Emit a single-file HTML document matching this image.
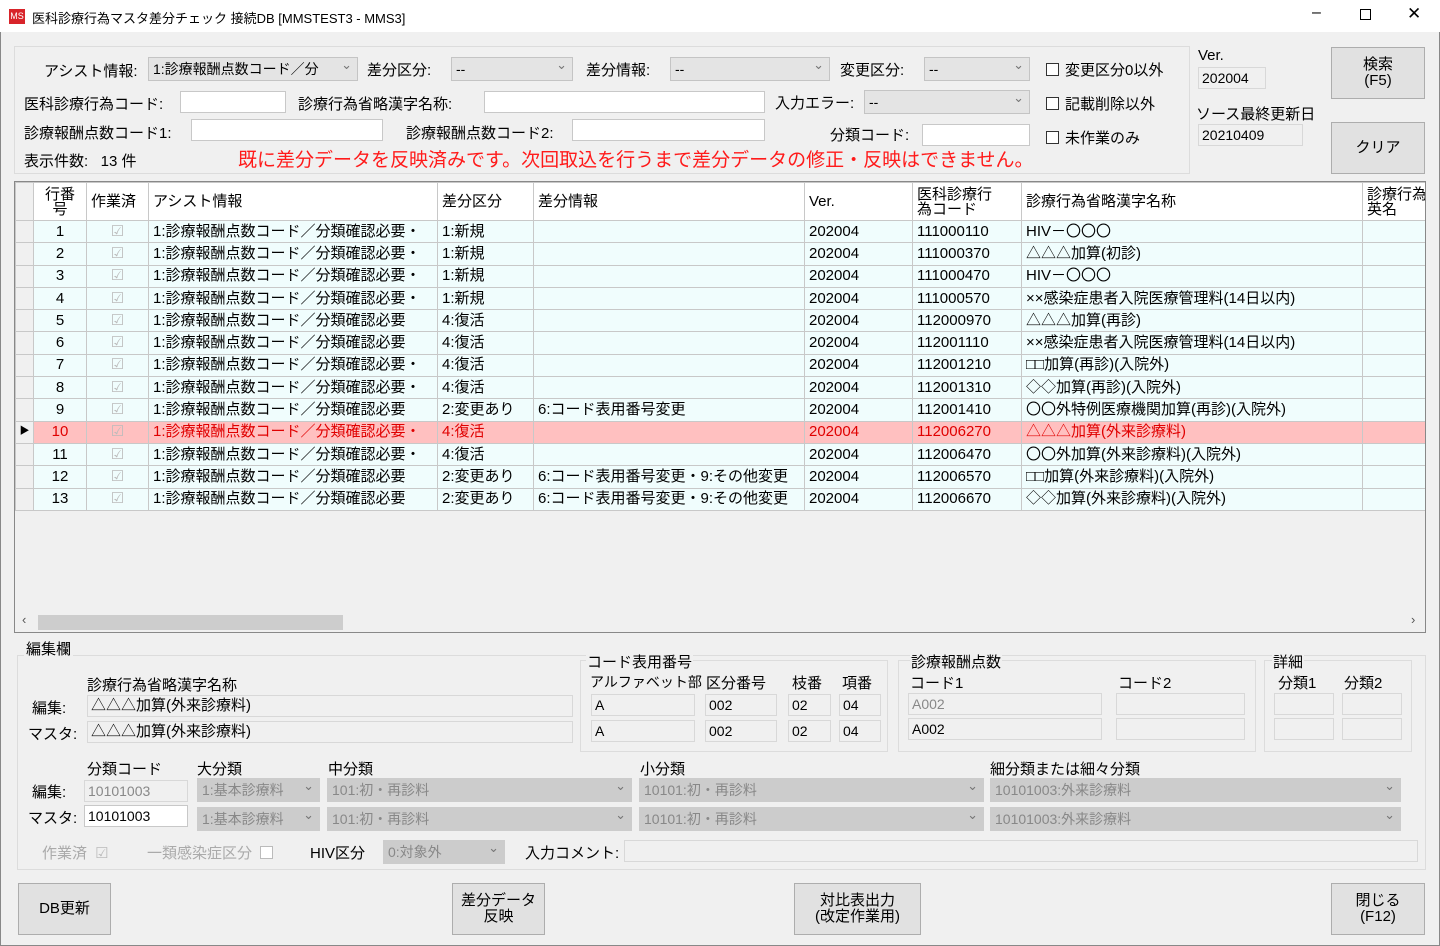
<!DOCTYPE html>
<html><head><meta charset="utf-8"><style>
*{box-sizing:border-box;margin:0;padding:0}
body{width:1440px;height:946px;background:#f0f0f0;font-family:"Liberation Sans","Noto Sans CJK JP",sans-serif;font-size:15px;color:#000;position:relative;overflow:hidden}
.a{position:absolute;white-space:nowrap}
.tb{position:absolute;background:#fff;border:1px solid #c8c8c8;height:22px;padding:1px 3px;font-size:14px;line-height:18px}
.ro{background:#f0f0f0;border:1px solid #d8d8d8}
.cb{position:absolute;background:#e4e4e4;border:1px solid #c4c4c4;height:24px;padding:2px 4px;font-size:14px;line-height:18px;color:#000}
.cb:after{content:"⌄";position:absolute;right:5px;top:-2px;color:#777;font-size:13px}
.dis{background:#ccc;border-color:#ccc;color:#888}
.btn{position:absolute;background:#e1e1e1;border:1px solid #adadad;text-align:center;font-size:15px;line-height:16px;display:flex;align-items:center;justify-content:center}
.chk{display:inline-block;width:13px;height:13px;border:1px solid #333;background:#fff;vertical-align:-1px;margin-right:6px}
.grp{position:absolute;border:1px solid #dcdcdc}
.wrap{position:absolute;left:15px;top:182px;width:1410px;height:432px;overflow:hidden}
table{border-collapse:collapse;table-layout:fixed;width:1410px}
td,th{border:1px solid #c8c8c8;height:22.3px;font-size:15px;line-height:18px;padding:0 4px;overflow:hidden;white-space:nowrap;font-weight:normal;text-align:left}
th{height:38px;background:#fff}
tr.r td{background:#f0fdfd}
tr.s td{background:#ffc0c0;color:#e00000}
td.rh{background:#f0f0f0!important}
td.c{text-align:center}
.ck{color:#bbb!important;font-size:15px}
</style></head><body>
<div class="a" style="left:0;top:0;width:1440px;height:32px;background:#fff"></div>
<div class="a" style="left:9px;top:9px;width:16px;height:15px;background:#d8242a;color:#fff;font-size:9px;line-height:15px;text-align:center">MS</div>
<div class="a" style="left:32px;top:8px;font-size:13px">医科診療行為マスタ差分チェック 接続DB [MMSTEST3 - MMS3]</div>
<div class="a" style="left:1312px;top:4px;font-size:16px">–</div>
<div class="a" style="left:1360px;top:9px;width:11px;height:11px;border:1px solid #000"></div>
<div class="a" style="left:1407px;top:4px;font-size:17px">✕</div>
<div class="a" style="left:0;top:32px;width:1440px;height:914px;border:1px solid #888;border-top:none"></div>

<div class="grp" style="left:14px;top:46px;width:1176px;height:128px"></div>
<div class="a" style="left:44px;top:60px">アシスト情報:</div>
<div class="cb" style="left:148px;top:57px;width:210px">1:診療報酬点数コード／分</div>
<div class="a" style="left:367px;top:59px">差分区分:</div>
<div class="cb" style="left:451px;top:57px;width:122px">--</div>
<div class="a" style="left:586px;top:59px">差分情報:</div>
<div class="cb" style="left:670px;top:57px;width:160px">--</div>
<div class="a" style="left:840px;top:59px">変更区分:</div>
<div class="cb" style="left:924px;top:57px;width:106px">--</div>
<div class="a" style="left:1046px;top:59px"><span class="chk"></span>変更区分0以外</div>
<div class="a" style="left:24px;top:93px">医科診療行為コード:</div>
<div class="tb" style="left:180px;top:91px;width:106px"></div>
<div class="a" style="left:298px;top:93px">診療行為省略漢字名称:</div>
<div class="tb" style="left:484px;top:91px;width:281px"></div>
<div class="a" style="left:775px;top:92px">入力エラー:</div>
<div class="cb" style="left:864px;top:90px;width:166px">--</div>
<div class="a" style="left:1046px;top:93px"><span class="chk"></span>記載削除以外</div>
<div class="a" style="left:24px;top:122px">診療報酬点数コード1:</div>
<div class="tb" style="left:191px;top:119px;width:192px"></div>
<div class="a" style="left:406px;top:122px">診療報酬点数コード2:</div>
<div class="tb" style="left:572px;top:119px;width:193px"></div>
<div class="a" style="left:830px;top:124px">分類コード:</div>
<div class="tb" style="left:922px;top:124px;width:108px"></div>
<div class="a" style="left:1046px;top:127px"><span class="chk"></span>未作業のみ</div>
<div class="a" style="left:24px;top:150px">表示件数:&nbsp;&nbsp; 13 件</div>
<div class="a" style="left:238px;top:145px;font-size:19px;color:#ff1a1a">既に差分データを反映済みです。次回取込を行うまで差分データの修正・反映はできません。</div>
<div class="a" style="left:1198px;top:47px">Ver.</div>
<div class="tb ro" style="left:1198px;top:67px;width:68px">202004</div>
<div class="a" style="left:1196px;top:103px">ソース最終更新日</div>
<div class="tb ro" style="left:1198px;top:124px;width:105px">20210409</div>
<div class="btn" style="left:1331px;top:47px;width:94px;height:52px">検索<br>(F5)</div>
<div class="btn" style="left:1331px;top:122px;width:94px;height:52px">クリア</div>

<div class="a" style="left:14px;top:181px;width:1412px;height:452px;border:1px solid #888;background:#f0f0f0"></div>
<div class="wrap">
<table>
<colgroup><col style="width:18px"><col style="width:53px"><col style="width:62px"><col style="width:289px"><col style="width:96px"><col style="width:271px"><col style="width:108px"><col style="width:109px"><col style="width:341px"><col style="width:63px"></colgroup>
<tr><th style="background:#f0f0f0"></th><th style="text-align:center;line-height:15px;padding:0">行番<br>号</th><th>作業済</th><th>アシスト情報</th><th>差分区分</th><th>差分情報</th><th>Ver.</th><th style="line-height:15px">医科診療行<br>為コード</th><th>診療行為省略漢字名称</th><th style="line-height:15px">診療行為<br>英名</th></tr>
<tr class="r"><td class="rh"></td><td class="c">1</td><td class="c ck">☑</td><td>1:診療報酬点数コード／分類確認必要・</td><td>1:新規</td><td></td><td>202004</td><td>111000110</td><td>HIV－〇〇〇</td><td></td></tr>
<tr class="r"><td class="rh"></td><td class="c">2</td><td class="c ck">☑</td><td>1:診療報酬点数コード／分類確認必要・</td><td>1:新規</td><td></td><td>202004</td><td>111000370</td><td>△△△加算(初診)</td><td></td></tr>
<tr class="r"><td class="rh"></td><td class="c">3</td><td class="c ck">☑</td><td>1:診療報酬点数コード／分類確認必要・</td><td>1:新規</td><td></td><td>202004</td><td>111000470</td><td>HIV－〇〇〇</td><td></td></tr>
<tr class="r"><td class="rh"></td><td class="c">4</td><td class="c ck">☑</td><td>1:診療報酬点数コード／分類確認必要・</td><td>1:新規</td><td></td><td>202004</td><td>111000570</td><td>××感染症患者入院医療管理料(14日以内)</td><td></td></tr>
<tr class="r"><td class="rh"></td><td class="c">5</td><td class="c ck">☑</td><td>1:診療報酬点数コード／分類確認必要</td><td>4:復活</td><td></td><td>202004</td><td>112000970</td><td>△△△加算(再診)</td><td></td></tr>
<tr class="r"><td class="rh"></td><td class="c">6</td><td class="c ck">☑</td><td>1:診療報酬点数コード／分類確認必要</td><td>4:復活</td><td></td><td>202004</td><td>112001110</td><td>××感染症患者入院医療管理料(14日以内)</td><td></td></tr>
<tr class="r"><td class="rh"></td><td class="c">7</td><td class="c ck">☑</td><td>1:診療報酬点数コード／分類確認必要・</td><td>4:復活</td><td></td><td>202004</td><td>112001210</td><td>□□加算(再診)(入院外)</td><td></td></tr>
<tr class="r"><td class="rh"></td><td class="c">8</td><td class="c ck">☑</td><td>1:診療報酬点数コード／分類確認必要・</td><td>4:復活</td><td></td><td>202004</td><td>112001310</td><td>◇◇加算(再診)(入院外)</td><td></td></tr>
<tr class="r"><td class="rh"></td><td class="c">9</td><td class="c ck">☑</td><td>1:診療報酬点数コード／分類確認必要</td><td>2:変更あり</td><td>6:コード表用番号変更</td><td>202004</td><td>112001410</td><td>〇〇外特例医療機関加算(再診)(入院外)</td><td></td></tr>
<tr class="s"><td class="rh" style="color:#000;font-size:10px;text-align:center;padding:0">▶</td><td class="c">10</td><td class="c ck">☑</td><td>1:診療報酬点数コード／分類確認必要・</td><td>4:復活</td><td></td><td>202004</td><td>112006270</td><td>△△△加算(外来診療料)</td><td></td></tr>
<tr class="r"><td class="rh"></td><td class="c">11</td><td class="c ck">☑</td><td>1:診療報酬点数コード／分類確認必要・</td><td>4:復活</td><td></td><td>202004</td><td>112006470</td><td>〇〇外加算(外来診療料)(入院外)</td><td></td></tr>
<tr class="r"><td class="rh"></td><td class="c">12</td><td class="c ck">☑</td><td>1:診療報酬点数コード／分類確認必要</td><td>2:変更あり</td><td>6:コード表用番号変更・9:その他変更</td><td>202004</td><td>112006570</td><td>□□加算(外来診療料)(入院外)</td><td></td></tr>
<tr class="r"><td class="rh"></td><td class="c">13</td><td class="c ck">☑</td><td>1:診療報酬点数コード／分類確認必要</td><td>2:変更あり</td><td>6:コード表用番号変更・9:その他変更</td><td>202004</td><td>112006670</td><td>◇◇加算(外来診療料)(入院外)</td><td></td></tr>
</table>
</div>
<div class="a" style="left:15px;top:614px;width:1410px;height:17px;background:#f0f0f0"></div>
<div class="a" style="left:38px;top:615px;width:305px;height:15px;background:#cdcdcd"></div>
<div class="a" style="left:22px;top:612px;font-size:13px;color:#555">‹</div>
<div class="a" style="left:1411px;top:612px;font-size:13px;color:#555">›</div>

<div class="grp" style="left:17px;top:655px;width:1409px;height:215px"></div>
<div class="a" style="left:24px;top:638px;background:#f0f0f0;padding:0 2px">編集欄</div>
<div class="a" style="left:87px;top:674px">診療行為省略漢字名称</div>
<div class="a" style="left:32px;top:697px">編集:</div>
<div class="tb ro" style="left:87px;top:695px;width:486px;font-size:15px">△△△加算(外来診療料)</div>
<div class="a" style="left:28px;top:723px">マスタ:</div>
<div class="tb ro" style="left:87px;top:721px;width:486px;font-size:15px">△△△加算(外来診療料)</div>

<div class="grp" style="left:580px;top:660px;width:308px;height:92px"></div>
<div class="a" style="left:586px;top:651px;background:#f0f0f0;padding:0 1px">コード表用番号</div>
<div class="a" style="left:590px;top:672px;font-size:14px">アルファベット部</div>
<div class="a" style="left:706px;top:672px">区分番号</div>
<div class="a" style="left:792px;top:672px">枝番</div>
<div class="a" style="left:842px;top:672px">項番</div>
<div class="tb ro" style="left:591px;top:694px;width:104px">A</div>
<div class="tb ro" style="left:705px;top:694px;width:72px">002</div>
<div class="tb ro" style="left:788px;top:694px;width:43px">02</div>
<div class="tb ro" style="left:839px;top:694px;width:42px">04</div>
<div class="tb ro" style="left:591px;top:720px;width:104px">A</div>
<div class="tb ro" style="left:705px;top:720px;width:72px">002</div>
<div class="tb ro" style="left:788px;top:720px;width:43px">02</div>
<div class="tb ro" style="left:839px;top:720px;width:42px">04</div>

<div class="grp" style="left:898px;top:660px;width:358px;height:92px"></div>
<div class="a" style="left:910px;top:651px;background:#f0f0f0;padding:0 1px">診療報酬点数</div>
<div class="a" style="left:910px;top:672px">コード1</div>
<div class="a" style="left:1118px;top:672px">コード2</div>
<div class="tb ro" style="left:908px;top:693px;width:194px;color:#888">A002</div>
<div class="tb ro" style="left:1116px;top:693px;width:129px"></div>
<div class="tb ro" style="left:908px;top:718px;width:194px">A002</div>
<div class="tb ro" style="left:1116px;top:718px;width:129px"></div>

<div class="grp" style="left:1264px;top:660px;width:148px;height:92px"></div>
<div class="a" style="left:1272px;top:651px;background:#f0f0f0;padding:0 1px">詳細</div>
<div class="a" style="left:1278px;top:672px">分類1</div>
<div class="a" style="left:1344px;top:672px">分類2</div>
<div class="tb ro" style="left:1274px;top:693px;width:60px"></div>
<div class="tb ro" style="left:1342px;top:693px;width:60px"></div>
<div class="tb ro" style="left:1274px;top:718px;width:60px"></div>
<div class="tb ro" style="left:1342px;top:718px;width:60px"></div>

<div class="a" style="left:87px;top:758px">分類コード</div>
<div class="a" style="left:197px;top:758px">大分類</div>
<div class="a" style="left:328px;top:758px">中分類</div>
<div class="a" style="left:640px;top:758px">小分類</div>
<div class="a" style="left:990px;top:758px">細分類または細々分類</div>
<div class="a" style="left:32px;top:781px">編集:</div>
<div class="a" style="left:28px;top:807px">マスタ:</div>
<div class="tb ro" style="left:84px;top:780px;width:104px;color:#888">10101003</div>
<div class="tb" style="left:84px;top:805px;width:104px">10101003</div>
<div class="cb dis" style="left:197px;top:778px;width:123px">1:基本診療料</div>
<div class="cb dis" style="left:197px;top:807px;width:123px">1:基本診療料</div>
<div class="cb dis" style="left:327px;top:778px;width:305px">101:初・再診料</div>
<div class="cb dis" style="left:327px;top:807px;width:305px">101:初・再診料</div>
<div class="cb dis" style="left:639px;top:778px;width:345px">10101:初・再診料</div>
<div class="cb dis" style="left:639px;top:807px;width:345px">10101:初・再診料</div>
<div class="cb dis" style="left:990px;top:778px;width:411px">10101003:外来診療料</div>
<div class="cb dis" style="left:990px;top:807px;width:411px">10101003:外来診療料</div>
<div class="a" style="left:42px;top:842px;color:#aaa">作業済 <span style="color:#bbb;margin-left:4px">☑</span></div>
<div class="a" style="left:147px;top:842px;color:#aaa">一類感染症区分 <span class="chk" style="border-color:#bbb;margin-left:4px"></span></div>
<div class="a" style="left:310px;top:842px">HIV区分</div>
<div class="cb dis" style="left:383px;top:840px;width:122px">0:対象外</div>
<div class="a" style="left:525px;top:842px">入力コメント:</div>
<div class="tb ro" style="left:624px;top:840px;width:794px"></div>

<div class="btn" style="left:18px;top:883px;width:93px;height:52px">DB更新</div>
<div class="btn" style="left:452px;top:883px;width:93px;height:52px">差分データ<br>反映</div>
<div class="btn" style="left:794px;top:883px;width:127px;height:52px">対比表出力<br>(改定作業用)</div>
<div class="btn" style="left:1331px;top:883px;width:94px;height:52px">閉じる<br>(F12)</div>
</body></html>
